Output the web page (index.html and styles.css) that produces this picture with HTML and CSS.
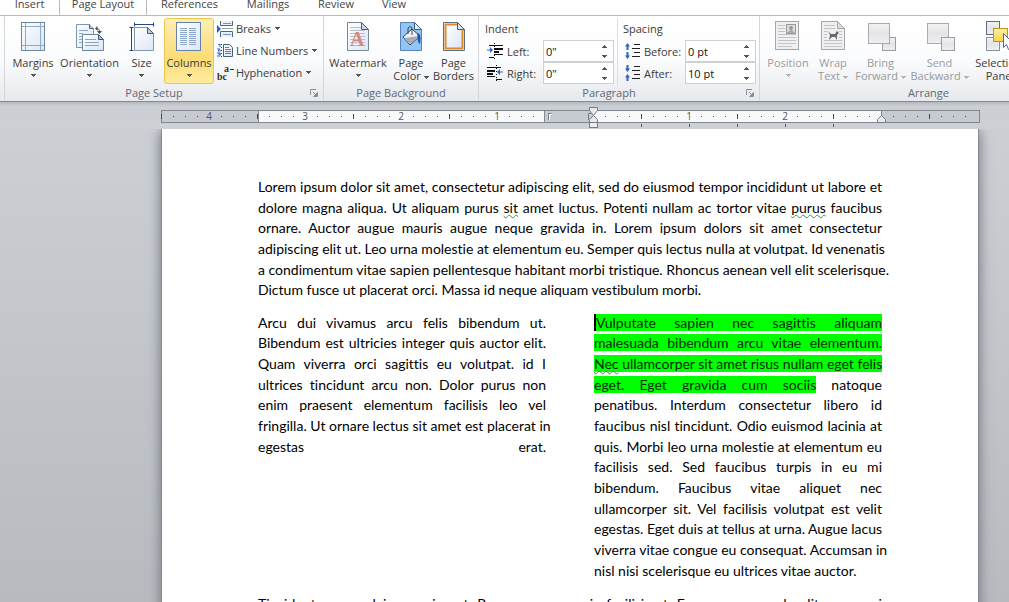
FILE: index.html
```html
<!DOCTYPE html>
<html lang="en">
<head>
<meta charset="utf-8">
<title>Document - Page Layout</title>
<link rel="stylesheet" href="styles.css">
</head>
<body>
<svg class="defs" width="0" height="0" aria-hidden="true">
  <defs>
    <linearGradient id="paper" x1="0" y1="0" x2="1" y2="1"><stop offset="0" stop-color="#fff"/><stop offset="1" stop-color="#dbe6f5"/></linearGradient>
    <linearGradient id="grey" x1="0" y1="0" x2="0" y2="1"><stop offset="0" stop-color="#f3f3f5"/><stop offset="0.5" stop-color="#e4e4e7"/><stop offset="1" stop-color="#efeff1"/></linearGradient>
    <linearGradient id="gold" x1="0" y1="0" x2="0" y2="1"><stop offset="0" stop-color="#fff0a0"/><stop offset="1" stop-color="#f5d250"/></linearGradient>
    <symbol id="down" viewBox="0 0 5 3"><path d="M0 0h5v1H4v1H3v1H2V2H1V1H0z" fill="currentColor"/></symbol>
    <symbol id="launcher" viewBox="0 0 8 8"><path d="M.5 6V.5H6M3 3l3 3M7.500 3.500v4h-4z" fill="none" stroke="#8b8f96"/><path d="M7 4v3H4z" fill="#8b8f96"/></symbol>
  </defs>
</svg>
<nav class="tabs">
  <a class="tab tab-insert" href="#insert">Insert</a>
  <a class="tab tab-active" href="#layout" aria-current="page">Page Layout</a>
  <a class="tab tab-refs" href="#references">References</a>
  <a class="tab tab-mail" href="#mailings">Mailings</a>
  <a class="tab tab-review" href="#review">Review</a>
  <a class="tab tab-view" href="#view">View</a>
</nav>
<div class="ribbon">
  <section class="group group-setup">
    <div class="tools">
      <button class="big w54"><svg width="32" height="32" viewBox="0 0 32 32"><rect x="4.500" y="2.500" width="23" height="28" fill="url(#paper)" stroke="#6f86a3"/><path d="M8.500 3v27M23.500 3v27M5 6.500h22M5 25.500h22" stroke="#8fa9c8" fill="none"/></svg><span>Margins</span><svg class="arrow"><use href="#down"/></svg></button>
      <button class="big w59"><svg width="32" height="32" viewBox="0 0 32 32"><path d="M2.500 4.500h13l4 4v19h-17z" fill="url(#paper)" stroke="#7d94b0"/><path d="M15.500 4.500v4h4" fill="#bcd0e8" stroke="#46607f"/><path d="M5 10.500h9M5 13.500h4M5 16.500h3M5 19.500h3M5 22.500h3" stroke="#8ba5c4"/><path d="M8.500 14.500h16l5 5v11h-21z" fill="url(#paper)" stroke="#6c85a3"/><path d="M24.500 14.500v5h5z" fill="#a9c1de" stroke="#3f5878"/><path d="M11 19.500h11M11 22.500h14M11 25.500h14" stroke="#88a3c3"/><path d="M22.500 8.500c2 0 3 1 3 3" fill="none" stroke="#3a4a60"/><path d="M21 8.500l2.500-2.500v5zM23 11h5l-2.500 3z" fill="#3a4a60"/></svg><span>Orientation</span><svg class="arrow"><use href="#down"/></svg></button>
      <button class="big w45"><svg width="32" height="32" viewBox="0 0 32 32"><path d="M8.500 7.500h13l6 6v17h-19z" fill="url(#paper)" stroke="#8296af"/><path d="M21.500 7.500v6h6z" fill="#b8cce5" stroke="#46607f"/><path d="M9 4.500h18M8.500 2.500v4M27.500 2.500v4M5.500 8v22M3.500 7.500h4M3.500 30.500h4" stroke="#27438f" fill="none"/></svg><span>Size</span><svg class="arrow"><use href="#down"/></svg></button>
      <button class="big w50 pressed"><svg width="32" height="32" viewBox="0 0 32 32"><rect x="3.500" y="2.500" width="24" height="28" fill="url(#paper)" stroke="#6482a8"/><path d="M7 8.500h8M7 10.500h8M7 12.500h8M7 14.500h8M7 16.500h8M7 18.500h8M7 20.500h8M7 22.500h8M7 24.500h8M16 8.500h8M16 10.500h8M16 12.500h8M16 14.500h8M16 16.500h8M16 18.500h8M16 20.500h8M16 22.500h8M16 24.500h8" stroke="#8ba7c9" stroke-dasharray="7 1"/></svg><span>Columns</span><svg class="arrow"><use href="#down"/></svg></button>
      <div class="stack">
        <button class="small"><svg width="17" height="16" viewBox="0 0 17 16"><path d="M3.500 0v4.500h12V0M3.500 16v-5.500h12V16" fill="#eaf1fa" stroke="#496585"/><path d="M6 2.500h8M6 13.500h8" stroke="#7895b8"/><path d="M0 4l4 4-4 4z" fill="#2d5fc4"/><path d="M5 7.500h11" stroke="#8f9dac"/></svg>Breaks<svg class="arrow"><use href="#down"/></svg></button>
        <button class="small"><svg width="17" height="16" viewBox="0 0 17 16"><path d="M1 2l2-1v3M0 6h3l-2 2h3M0 10h3v3H0M1 11h3" fill="none" stroke="#3466c8"/><path d="M4.500 1v14" stroke="#333" stroke-dasharray="1 2"/><path d="M6.500 1.500h6l3 3v9h-9z" fill="url(#paper)" stroke="#46607f"/><path d="M8 4.500h4M8 6.500h6M8 8.500h6M8 10.500h6" stroke="#5d80ac"/></svg>Line Numbers<svg class="arrow"><use href="#down"/></svg></button>
        <button class="small"><svg width="17" height="16" viewBox="0 0 17 16"><text x="0" y="15" class="glyph">bc</text><text x="7" y="7" class="glyph">a</text><path d="M13 4.500h4" stroke="#333"/></svg>Hyphenation<svg class="arrow"><use href="#down"/></svg></button>
      </div>
    </div>
    <h2 class="caption with-launch">Page Setup</h2>
    <button class="launch" aria-label="Page Setup options"><svg width="8" height="8"><use href="#launcher"/></svg></button>
  </section>
  <section class="group group-background">
    <div class="tools">
      <button class="big w66"><svg width="32" height="32" viewBox="0 0 32 32"><path d="M5.500 2.500h14l7 7v21h-21z" fill="url(#paper)" stroke="#7c8794"/><path d="M8 7.500h11M8 10.500h15M8 13.500h15M8 16.500h15M8 19.500h15M8 22.500h15M8 25.500h15" stroke="#b9bec6"/><path d="M19.500 2.500v7h7z" fill="#c6d7ec" stroke="#46607f"/><text x="8" y="26" class="mark-a">A</text></svg><span>Watermark</span><svg class="arrow"><use href="#down"/></svg></button>
      <button class="big w40"><svg width="32" height="32" viewBox="0 0 32 32"><path d="M5.500 2.500h14l7 7v21h-21z" fill="#8fc5f7" stroke="#5b84b5"/><path d="M19.500 2.500v7h7z" fill="#e4effb" stroke="#46607f"/><path d="M8 17l9-8 8 7-10 9z" fill="#eef1f5" stroke="#3b4350"/><path d="M9 18l15-2-9 8z" fill="#a7adb7"/><path d="M13 14V9c0-3 4-3 4 0v6" fill="none" stroke="#444"/><path d="M22 13c4 0 4 5 3 11-3-2-2-6-3-11z" fill="#1d59ad"/></svg><span>Page<br>Color <svg class="arrow"><use href="#down"/></svg></span></button>
      <button class="big w45"><svg width="32" height="32" viewBox="0 0 32 32"><path d="M5.500 2.500h14l7 7v21h-21z" fill="#fff" stroke="#5c6c80"/><path d="M19 4.500H7.500v24h17V10" fill="url(#paper)" stroke="#db8a2c" stroke-width="2"/><path d="M19.500 2.500v7h7z" fill="#d5e2f2" stroke="#46607f"/></svg><span>Page<br>Borders</span></button>
    </div>
    <h2 class="caption">Page Background</h2>
  </section>
  <section class="group group-paragraph">
    <div class="fields">
      <div class="fieldset">
        <h3>Indent</h3>
        <div class="field"><svg width="17" height="16" viewBox="0 0 17 16"><path d="M2 2.500h14M7 5.500h9M7 8.500h5M7 11.500h9M2 14.500h5" stroke="#111"/><path d="M7 6.500h9M7 9.500h5" stroke="#111"/><path d="M7.500 0v16" stroke="#111" stroke-dasharray="1 2"/><path d="M0 6.500h3V4l3 3-3 3V7.500H0z" fill="#2d62c8"/></svg><label for="left">Left:</label><span class="spin"><input id="left" type="text" value="0&quot;"><span class="steps"><button aria-label="Increase"><svg class="arrow up"><use href="#down"/></svg></button><button aria-label="Decrease"><svg class="arrow"><use href="#down"/></svg></button></span></span></div>
        <div class="field"><svg width="17" height="16" viewBox="0 0 17 16"><path d="M0 2.500h14M0 5.500h8M0 8.500h6M0 11.500h8M9 14.500h6" stroke="#111"/><path d="M0 6.500h8M0 9.500h6" stroke="#111"/><path d="M9.500 0v16" stroke="#111" stroke-dasharray="1 2"/><path d="M16 6.500h-3V4l-3 3 3 3V7.500h3z" fill="#2d62c8"/></svg><label for="right">Right:</label><span class="spin"><input id="right" type="text" value="0&quot;"><span class="steps"><button aria-label="Increase"><svg class="arrow up"><use href="#down"/></svg></button><button aria-label="Decrease"><svg class="arrow"><use href="#down"/></svg></button></span></span></div>
      </div>
      <div class="fieldset fieldset-spacing">
        <h3>Spacing</h3>
        <div class="field"><svg width="17" height="16" viewBox="0 0 17 16"><path d="M3.500 0L6 3.500H4.500V7h-2V3.500H1zM3.500 16L6 12.500H4.500V9h-2v3.500H1z" fill="#2d62c8"/><path d="M10 1.500h6M8 5.500h8M10 9.500h6M8 13.500h8" stroke="#222"/></svg><label for="before">Before:</label><span class="spin"><input id="before" type="text" value="0 pt"><span class="steps"><button aria-label="Increase"><svg class="arrow up"><use href="#down"/></svg></button><button aria-label="Decrease"><svg class="arrow"><use href="#down"/></svg></button></span></span></div>
        <div class="field"><svg width="17" height="16" viewBox="0 0 17 16"><path d="M3.500 7L6 3.500H4.500V0h-2v3.500H1zM3.500 9L6 12.500H4.500V16h-2v-3.500H1z" fill="#2d62c8"/><path d="M10 1.500h6M8 5.500h8M10 9.500h6M8 13.500h8" stroke="#222"/></svg><label for="after">After:</label><span class="spin"><input id="after" type="text" value="10 pt"><span class="steps"><button aria-label="Increase"><svg class="arrow up"><use href="#down"/></svg></button><button aria-label="Decrease"><svg class="arrow"><use href="#down"/></svg></button></span></span></div>
      </div>
    </div>
    <h2 class="caption with-launch">Paragraph</h2>
    <button class="launch" aria-label="Paragraph options"><svg width="8" height="8"><use href="#launcher"/></svg></button>
  </section>
  <section class="group group-arrange">
    <div class="tools">
      <button class="big w54" disabled><svg width="32" height="32" viewBox="0 0 32 32"><rect x="3.500" y="1.500" width="23" height="28" fill="#f0f0f2" stroke="#a5a6aa"/><path d="M6 5.500h7M6 8.500h7M6 11.500h7M6 14.500h18M6 17.500h18M6 20.500h18M6 23.500h18M6 26.500h14" stroke="#c2c3c8"/><rect x="14.500" y="4.500" width="9" height="9" fill="#dcdde0" stroke="#999"/><circle cx="19" cy="8" r="2" fill="#999"/><path d="M15 13l4-4 4 4z" fill="#aaa"/></svg><span>Position</span><svg class="arrow"><use href="#down"/></svg></button>
      <button class="big w36" disabled><svg width="32" height="32" viewBox="0 0 32 32"><path d="M4.500 1.500h16l7 7v21h-23z" fill="#f0f0f2" stroke="#a5a6aa"/><path d="M20.500 1.500v7h7z" fill="#ddd" stroke="#a5a6aa"/><path d="M7 5.500h11M7 8.500h11M7 11.500h3M22 11.500h3M7 14.500h3M22 14.500h3M7 17.500h3M22 17.500h3M7 20.500h18M7 23.500h18M7 26.500h18" stroke="#c2c3c8"/><path d="M11 11l3 3h4l2-3 2 2-2 2v5l-2-3h-3l-3 3 1-5z" fill="#696a6e"/></svg><span>Wrap<br>Text <svg class="arrow"><use href="#down"/></svg></span></button>
      <button class="big w59" disabled><svg width="32" height="32" viewBox="0 0 32 32"><rect x="17.500" y="17.500" width="13" height="13" fill="url(#grey)" stroke="#9c9da1"/><rect x="3.500" y="3.500" width="21" height="20" fill="url(#grey)" stroke="#aaabb0"/></svg><span>Bring<br>Forward <svg class="arrow"><use href="#down"/></svg></span></button>
      <button class="big w59" disabled><svg width="32" height="32" viewBox="0 0 32 32"><rect x="3.500" y="3.500" width="21" height="20" fill="url(#grey)" stroke="#aaabb0"/><rect x="17.500" y="17.500" width="13" height="13" fill="url(#grey)" stroke="#9c9da1"/></svg><span>Send<br>Backward <svg class="arrow"><use href="#down"/></svg></span></button>
      <button class="big w59"><svg width="32" height="32" viewBox="0 0 32 32"><rect x="3.500" y="1.500" width="13" height="13" fill="url(#grey)" stroke="#5d6e82"/><rect x="3.500" y="17.500" width="13" height="13" fill="url(#grey)" stroke="#8b9199"/><rect x="10.500" y="8.500" width="14" height="13" fill="url(#gold)" stroke="#b99621"/><path d="M20.500 13.500v14l3-3 2 5 3-1-2-5h4z" fill="#fff" stroke="#4d6794"/></svg><span>Selection<br>Pane</span></button>
    </div>
    <h2 class="caption">Arrange</h2>
  </section>
</div>
<main class="workspace">
  <div class="ruler-band">
    <svg class="ruler" width="820" height="25" viewBox="0 0 820 25" role="img" aria-label="Horizontal ruler">
      <defs><pattern id="ticks" x="48" y="0" width="96" height="25" patternUnits="userSpaceOnUse"><path d="M12 12h1v1h-1zM24 12h1v1h-1zM36 12h1v1h-1zM48 10h1v5h-1zM60 12h1v1h-1zM72 12h1v1h-1zM84 12h1v1h-1z" fill="#444a52"/></pattern></defs>
      <rect x="0.500" y="6.500" width="818" height="12" fill="#c7cad0" stroke="#82868f"/>
      <path d="M97 7h287v11H97zM432 7h288v11H432z" fill="#f8f9fa"/>
      <path d="M97.500 7v11M383.500 7v11M720.500 7v11" stroke="#82868f"/>
      <path d="M0 7h384v11H0zM432 7h377v11H432z" fill="url(#ticks)"/>
      <g class="ruler-text"><text x="48" y="16">4</text><text x="144" y="16">3</text><text x="240" y="16">2</text><text x="336" y="16">1</text><text x="528" y="16">1</text><text x="624" y="16">2</text></g>
      <path d="M387.500 16V9.500h3M427.500 16V9.500h3" fill="none" stroke="#777c84"/>
      <path d="M388.500 16v-5.500h2" fill="none" stroke="#fff"/>
      <path d="M480.500 20v3M528.500 20v3M576.500 20v3M624.500 20v3M672.500 20v3" stroke="#555b64"/>
      <path d="M428.500 3.500h8v3l-4 5-4-5z" fill="#e8e9eb" stroke="#777c84"/>
      <path d="M428.500 18.500v-3l4-4 4 4v3z" fill="#e8e9eb" stroke="#777c84"/>
      <rect x="428.500" y="18.500" width="8" height="5" fill="#ececee" stroke="#777c84"/>
      <path d="M716.500 18.500v-3l4-4 4 4v3z" fill="#e8e9eb" stroke="#777c84"/>
    </svg>
  </div>
  <div class="desk">
    <article class="page">
      <p class="para">
        <span class="line">Lorem ipsum dolor sit amet, consectetur adipiscing elit, sed do eiusmod tempor incididunt ut labore et</span>
        <span class="line">dolore magna aliqua. Ut aliquam purus <span class="grammar">sit</span> amet luctus. Potenti nullam ac tortor vitae <span class="grammar">purus</span> faucibus</span>
        <span class="line">ornare. Auctor augue mauris augue neque gravida in. Lorem ipsum dolors sit amet consectetur</span>
        <span class="line">adipiscing elit ut. Leo urna molestie at elementum eu. Semper quis lectus nulla at volutpat. Id venenatis</span>
        <span class="line">a condimentum vitae sapien pellentesque habitant morbi tristique. Rhoncus aenean vell elit scelerisque.</span>
        <span class="line last">Dictum fusce ut placerat orci. Massa id neque aliquam vestibulum morbi.</span>
      </p>
      <div class="columns">
        <p class="para">
          <span class="line">Arcu dui vivamus arcu felis bibendum ut.</span>
          <span class="line">Bibendum est ultricies integer quis auctor elit.</span>
          <span class="line">Quam viverra orci sagittis eu volutpat. id I</span>
          <span class="line">ultrices tincidunt arcu non. Dolor purus non</span>
          <span class="line">enim praesent elementum facilisis leo vel</span>
          <span class="line">fringilla. Ut ornare lectus sit amet est placerat in</span>
          <span class="line">egestas erat.</span>
        </p>
        <p class="para">
          <span class="line"><mark class="caret">Vulputate sapien nec sagittis aliquam</mark></span>
          <span class="line"><mark>malesuada bibendum arcu vitae elementum.</mark></span>
          <span class="line"><mark><span class="grammar">Nec</span> ullamcorper sit amet risus nullam eget felis</mark></span>
          <span class="line"><mark>eget. Eget gravida cum sociis</mark> natoque</span>
          <span class="line">penatibus. Interdum consectetur libero id</span>
          <span class="line">faucibus nisl tincidunt. Odio euismod lacinia at</span>
          <span class="line">quis. Morbi leo urna molestie at elementum eu</span>
          <span class="line">facilisis sed. Sed faucibus turpis in eu mi</span>
          <span class="line">bibendum. Faucibus vitae aliquet nec</span>
          <span class="line">ullamcorper sit. Vel facilisis volutpat est velit</span>
          <span class="line">egestas. Eget duis at tellus at urna. Augue lacus</span>
          <span class="line">viverra vitae congue eu consequat. Accumsan in</span>
          <span class="line last">nisl nisi scelerisque eu ultrices vitae auctor.</span>
        </p>
      </div>
      <p class="para">
        <span class="line">Tincidunt nunc pulvinar sapien et. Purus non massa in facilisis et. Eu nunc commodo elit augue mi</span>
      </p>
    </article>
  </div>
</main>
</body>
</html>
```
FILE: styles.css
```css
* { box-sizing: border-box; }
body {
  margin: 0;
  height: 100vh;
  overflow: hidden;
  display: flex;
  flex-direction: column;
  font: 11px/13px "Open Sans", "Noto Sans", sans-serif;
  color: #3b3b3b;
  background: #fff;
}
.defs { position: absolute; }
button { font: inherit; color: inherit; background: none; border: 0; padding: 0; margin: 0; }
h2, h3, p { margin: 0; font-size: inherit; font-weight: normal; }

/* Tabs */
.tabs { display: flex; flex: none; height: 16px; border-bottom: 1px solid #b6babf; overflow: hidden; }
.tab { color: #444; text-decoration: none; line-height: 14px; height: 16px; margin-top: -3px; text-align: center; flex: none; }
.tab-insert { width: 59px; }
.tab-active { width: 88px; height: 19px; border: 1px solid #b6babf; border-width: 0 1px; border-radius: 0 0 3px 3px; background: #fff; }
.tab-refs { width: 85px; }
.tab-mail { width: 72px; }
.tab-review { width: 64px; }
.tab-view { width: 52px; }

/* Ribbon */
.ribbon {
  display: flex;
  flex: none;
  height: 86px;
  padding-left: 4px;
  overflow: hidden;
  background: linear-gradient(#fff, #fbfcfd 50%, #e6e9ed);
  border-bottom: 1px solid #868b93;
}
.group { position: relative; display: flex; flex-direction: column; flex: none; border-left: 1px solid #d3d6da; }
.group-setup { width: 319px; }
.group-background { width: 155px; }
.group-paragraph { width: 281px; }
.group-arrange { width: 338px; }
.tools { display: flex; flex: 1; padding: 2px 1px 0; }
.caption { height: 15px; text-align: center; color: #636870; line-height: 14px; }
.with-launch { padding-right: 20px; }
.launch { position: absolute; right: 5px; bottom: 4px; height: 8px; display: flex; }
.big { display: flex; flex-direction: column; align-items: center; flex: none; height: 66px; padding-top: 2px; white-space: nowrap; border: 1px solid transparent; border-top-width: 0; }
.big > svg:first-child { flex: none; margin-bottom: 4px; }
.big > .arrow { margin-top: 5px; }
.pressed { background: linear-gradient(#fdeeb3, #fbdc77 60%, #fdeb9d); border: 1px solid #edc44c; border-radius: 3px; padding-top: 1px; }
.w36 { width: 36px; }
.w40 { width: 40px; }
.w45 { width: 45px; }
.w50 { width: 50px; }
.w54 { width: 54px; }
.w59 { width: 59px; }
.w66 { width: 66px; }
.big:disabled { color: #9a9a9e; }
.arrow { width: 5px; height: 3px; flex: none; color: #555; }
span > .arrow { vertical-align: middle; }
:disabled .arrow { color: #b5b5b9; }
.up { transform: rotate(180deg); }
.stack { display: flex; flex-direction: column; padding-left: 3px; }
.small { display: flex; align-items: center; height: 22px; gap: 2px; padding-bottom: 1px; white-space: nowrap; }
.small .arrow { margin-left: 2px; }
.glyph { font: bold 10px "Liberation Serif", serif; fill: #333; }
.mark-a { font: bold 20px "Liberation Serif", serif; fill: #d68880; }

.fields { display: flex; flex: 1; padding-top: 2px; }
.fieldset { width: 138px; padding-left: 6px; }
.fieldset-spacing { width: 142px; padding-left: 5px; border-left: 1px solid #dcdfe3; }
.fieldset h3 { line-height: 22px; }
.field { display: flex; align-items: center; height: 22px; padding: 0 3px 0 2px; }
.field label { flex: 1; padding-left: 3px; white-space: nowrap; }
.spin { display: flex; width: 71px; height: 22px; border: 1px solid #cdd0d5; background: #fff; }
.fieldset-spacing .field { padding-left: 1px; }
.spin input { flex: 1; min-width: 0; border: 0; padding: 0 2px; background: none; font: inherit; color: #111; }
.steps { display: flex; flex-direction: column; width: 17px; }
.steps button { flex: 1; display: flex; align-items: center; justify-content: center; }

/* Document area */
.workspace { flex: 1; min-height: 0; display: flex; flex-direction: column; background: linear-gradient(#cdd0d5, #b7babf); }
.ruler-band { flex: none; height: 27px; padding: 2px 0 0 161px; overflow: hidden; background: linear-gradient(#b4b8be, #cbced3 4px, #cdd0d5); }
.ruler { display: block; }
.ruler-text { font-size: 10px; text-anchor: middle; fill: #555a62; }
.desk { flex: 1; min-height: 0; overflow: hidden; padding: 0 31px 0 162px; }
.page { min-height: 100%; padding: 48px 96px 0; background: #fff; box-shadow: -1px 0 #858a92, 1px 0 #858a92, 0 4px 11px 2px #777c84; color: #000; font: 14px/1.475 Lato, sans-serif; font-variant-ligatures: none; }
.line { display: block; text-align: justify; text-align-last: justify; white-space: nowrap; }
.last { text-align-last: left; }
.columns { display: grid; grid-template-columns: minmax(0, 1fr) minmax(0, 1fr); gap: 48px; margin: 12px 0 13px; }
mark { background: #0f0; color: #002b00; }
.caret { border-left: 2px solid #000; }
.grammar { text-decoration: underline wavy #2e9b3a 1px; text-underline-offset: 1px; text-decoration-skip-ink: none; }
```
